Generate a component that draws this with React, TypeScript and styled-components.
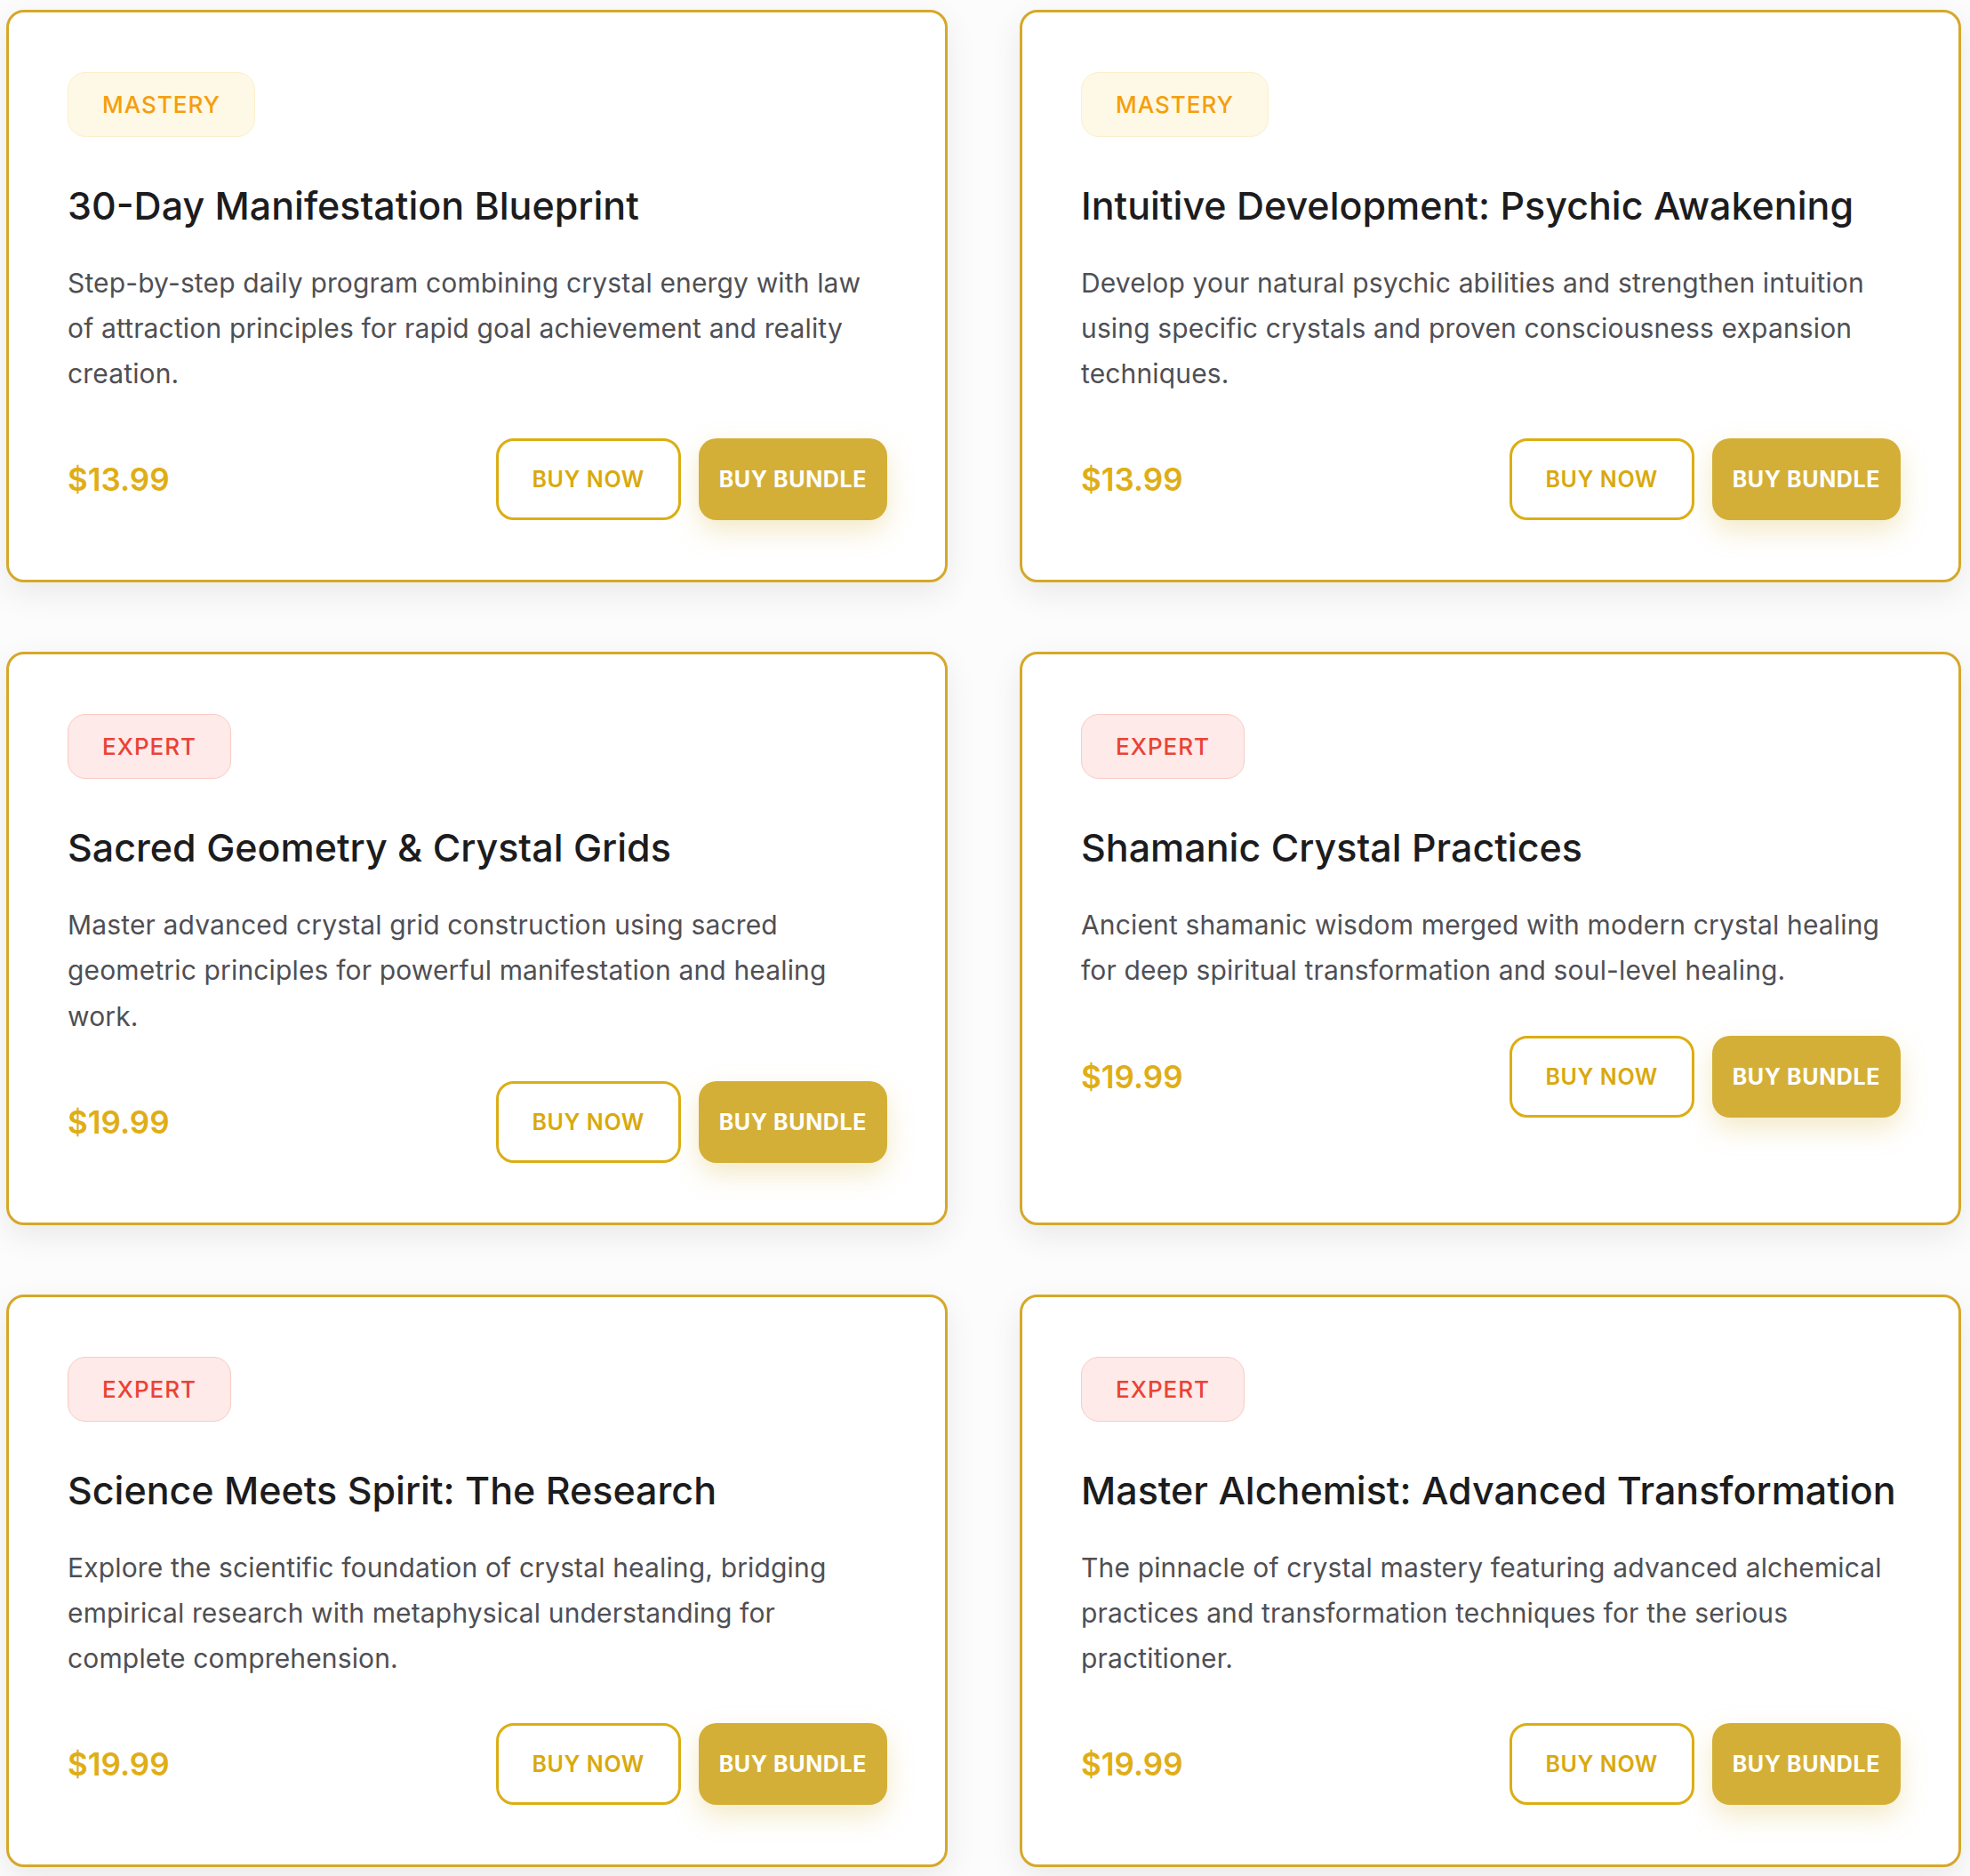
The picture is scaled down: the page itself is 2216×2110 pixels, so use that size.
import React from 'react';
import styled, { createGlobalStyle, css } from 'styled-components';

type Level = 'mastery' | 'expert';

type Course = {
  level: Level;
  title: string;
  description: string;
  price: string;
};

const courses: Course[] = [
  {
    level: 'mastery',
    title: '30-Day Manifestation Blueprint',
    description:
      'Step-by-step daily program combining crystal energy with law of attraction principles for rapid goal achievement and reality creation.',
    price: '$13.99',
  },
  {
    level: 'mastery',
    title: 'Intuitive Development: Psychic Awakening',
    description:
      'Develop your natural psychic abilities and strengthen intuition using specific crystals and proven consciousness expansion techniques.',
    price: '$13.99',
  },
  {
    level: 'expert',
    title: 'Sacred Geometry & Crystal Grids',
    description:
      'Master advanced crystal grid construction using sacred geometric principles for powerful manifestation and healing work.',
    price: '$19.99',
  },
  {
    level: 'expert',
    title: 'Shamanic Crystal Practices',
    description:
      'Ancient shamanic wisdom merged with modern crystal healing for deep spiritual transformation and soul-level healing.',
    price: '$19.99',
  },
  {
    level: 'expert',
    title: 'Science Meets Spirit: The Research',
    description:
      'Explore the scientific foundation of crystal healing, bridging empirical research with metaphysical understanding for complete comprehension.',
    price: '$19.99',
  },
  {
    level: 'expert',
    title: 'Master Alchemist: Advanced Transformation',
    description:
      'The pinnacle of crystal mastery featuring advanced alchemical practices and transformation techniques for the serious practitioner.',
    price: '$19.99',
  },
];

const GlobalStyle = createGlobalStyle`
  * {
    box-sizing: border-box;
  }
  body {
    margin: 0;
    background: #fcfcfc;
    font-family: Inter, "Noto Sans", "Liberation Sans", sans-serif;
  }
`;

const Grid = styled.main`
  display: grid;
  grid-template-columns: 1fr 1fr;
  column-gap: 81px;
  row-gap: 78px;
  padding: 11px 10px 11px 7px;
`;

const Card = styled.article`
  display: flex;
  flex-direction: column;
  align-items: flex-start;
  background: #ffffff;
  border: 3px solid #d6a82a;
  border-radius: 20px;
  padding: 67px 65px 67px 66px;
  box-shadow: 0 12px 36px rgba(0, 0, 0, 0.08);
`;

const badgeColors = {
  mastery: css`
    background: #fef8e6;
    border-color: #fcefcb;
    color: #f59e0b;
  `,
  expert: css`
    background: #feeae8;
    border-color: #f8cbc4;
    color: #ea4236;
  `,
};

const Badge = styled.span<{ $level: Level }>`
  display: inline-block;
  padding: 20px 38px;
  border: 1.5px solid;
  border-radius: 20px;
  font-size: 26px;
  line-height: 31px;
  font-weight: 500;
  letter-spacing: 1px;
  text-transform: uppercase;
  ${({ $level }) => badgeColors[$level]}
`;

const Title = styled.h3`
  margin: 52px 0 0;
  font-size: 43px;
  line-height: 51.6px;
  font-weight: 500;
  white-space: nowrap;
  color: #1c1c1e;
`;

const Description = styled.p`
  margin: 35px 0 0;
  font-size: 30px;
  line-height: 51.3px;
  font-weight: 400;
  letter-spacing: 0.15px;
  color: #4f4f54;
`;

const Footer = styled.div`
  display: flex;
  align-items: center;
  justify-content: space-between;
  align-self: stretch;
  margin-top: 47px;
`;

const Price = styled.span`
  font-size: 35px;
  font-weight: 600;
  color: #dfae16;
`;

const Actions = styled.div`
  display: flex;
  gap: 20px;
`;

const Button = styled.button<{ $solid?: boolean }>`
  min-width: 208px;
  height: 92px;
  padding: 0 23px;
  border-radius: 20px;
  font-family: inherit;
  font-size: 25px;
  letter-spacing: 0.6px;
  text-transform: uppercase;
  cursor: pointer;
  ${({ $solid }) =>
    $solid
      ? css`
          border: none;
          background: #d4af37;
          color: #ffffff;
          font-weight: 700;
          box-shadow: 0 12px 30px rgba(212, 175, 55, 0.28);
        `
      : css`
          border: 3px solid #dcae14;
          background: #ffffff;
          color: #d9a90c;
          font-weight: 600;
        `}
`;

const CourseCard: React.FC<{ course: Course }> = ({ course }) => (
  <Card>
    <Badge $level={course.level}>{course.level}</Badge>
    <Title>{course.title}</Title>
    <Description>{course.description}</Description>
    <Footer>
      <Price>{course.price}</Price>
      <Actions>
        <Button>Buy Now</Button>
        <Button $solid>Buy Bundle</Button>
      </Actions>
    </Footer>
  </Card>
);

const App: React.FC = () => (
  <>
    <GlobalStyle />
    <Grid>
      {courses.map((course) => (
        <CourseCard key={course.title} course={course} />
      ))}
    </Grid>
  </>
);

export default App;
